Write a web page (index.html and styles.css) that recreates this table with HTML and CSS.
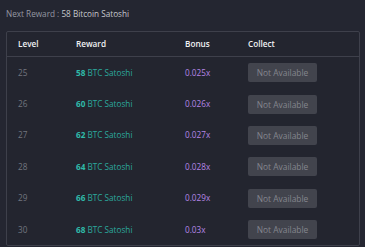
FILE: index.html
```html
<!DOCTYPE html>
<html lang="en">
<head>
    <meta charset="UTF-8">
    <title>Level Rewards</title>
    <link rel="stylesheet" href="styles.css">
</head>
<body>
    <div class="rewards">
        <p class="next-reward">Next Reward : <span>58 Bitcoin Satoshi</span></p>

        <div class="table">
            <div class="row head">
                <div>Level</div>
                <div>Reward</div>
                <div>Bonus</div>
                <div>Collect</div>
            </div>
            <div class="row">
                <div class="level">25</div>
                <div class="reward"><b>58</b> BTC Satoshi</div>
                <div class="bonus">0.025x</div>
                <div><button class="collect-btn" disabled>Not Available</button></div>
            </div>
            <div class="row">
                <div class="level">26</div>
                <div class="reward"><b>60</b> BTC Satoshi</div>
                <div class="bonus">0.026x</div>
                <div><button class="collect-btn" disabled>Not Available</button></div>
            </div>
            <div class="row">
                <div class="level">27</div>
                <div class="reward"><b>62</b> BTC Satoshi</div>
                <div class="bonus">0.027x</div>
                <div><button class="collect-btn" disabled>Not Available</button></div>
            </div>
            <div class="row">
                <div class="level">28</div>
                <div class="reward"><b>64</b> BTC Satoshi</div>
                <div class="bonus">0.028x</div>
                <div><button class="collect-btn" disabled>Not Available</button></div>
            </div>
            <div class="row">
                <div class="level">29</div>
                <div class="reward"><b>66</b> BTC Satoshi</div>
                <div class="bonus">0.029x</div>
                <div><button class="collect-btn" disabled>Not Available</button></div>
            </div>
            <div class="row">
                <div class="level">30</div>
                <div class="reward"><b>68</b> BTC Satoshi</div>
                <div class="bonus">0.03x</div>
                <div><button class="collect-btn" disabled>Not Available</button></div>
            </div>
        </div>
    </div>
</body>
</html>
```

FILE: styles.css
```css
/* General */
body {
    margin: 0;
    background: #242631;
    font-family: "Open Sans", "Noto Sans", sans-serif;
    font-size: 8.2px;
    color: #9a9ca6;
    overflow: hidden;
}

.rewards {
    padding: 8px 5px 0 6px;
}

.next-reward {
    margin: 0 0 11px;
    line-height: 12px;
    color: #9598a2;
}

.next-reward span {
    color: #c4c6cc;
}

/* Table */
.table {
    border: 1px solid #3e404b;
    border-radius: 2px;
    background: #23252f;
}

.row {
    display: grid;
    grid-template-columns: 58px 109px 63px 1fr;
    align-items: center;
    height: 31.4px;
    padding-left: 11px;
    line-height: 12px;
}

.row.head {
    height: 24px;
    border-bottom: 1px solid #3e404b;
    color: #f1f2f4;
    font-weight: 600;
}

.level {
    color: #72757f;
}

.reward {
    color: #2ba99d;
}

.reward b {
    font-weight: 700;
    color: #2fbaa9;
}

.bonus {
    color: #b586e6;
}

.collect-btn {
    width: 69px;
    height: 19px;
    padding: 0;
    border: none;
    border-radius: 2px;
    background: #42444d;
    color: #84868e;
    font-family: inherit;
    font-size: 8.4px;
}
```
